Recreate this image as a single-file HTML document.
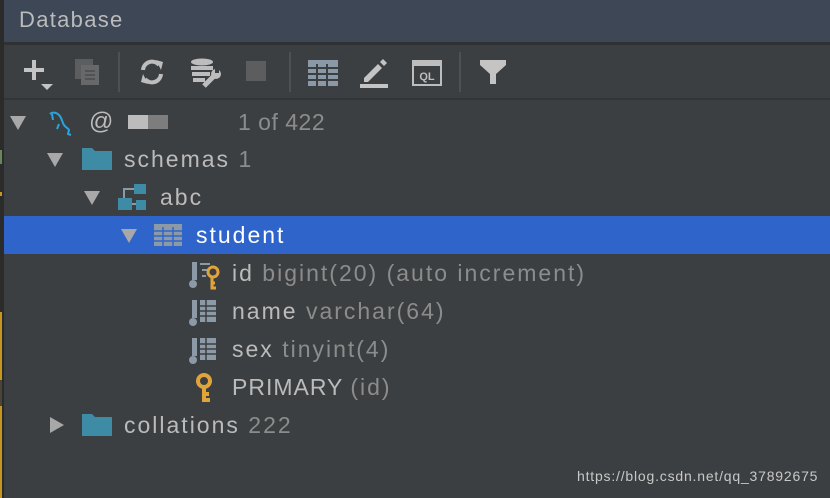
<!DOCTYPE html>
<html><head><meta charset="utf-8"><style>
*{margin:0;padding:0;box-sizing:border-box}
body{width:830px;height:498px;overflow:hidden;background:#3c3f41;font-family:"Liberation Sans",sans-serif;position:relative}
.strip{position:absolute;left:0;top:0;width:4px;height:498px;background:#2b2b2b}
.hdr{position:absolute;left:4px;top:0;width:826px;height:42px;background:#3d4756;color:#bbbbbb;font-size:22px;line-height:40px;padding-left:15px;letter-spacing:1.3px}
.sep{position:absolute;left:4px;top:42px;width:826px;height:3px;background:#2f3133}
.tb{position:absolute;left:4px;top:45px;width:826px;height:55px;background:#3c3f41;border-bottom:2px solid #323436}
.vs{position:absolute;top:7px;width:2px;height:40px;background:#4e5153}
.row{position:absolute;left:4px;width:826px;height:38px;font-size:23px;letter-spacing:2px;line-height:38px;color:#bbbbbb;white-space:nowrap}
.row span.g{color:#8c8c8c}
.tri{position:absolute;width:0;height:0;border-left:8px solid transparent;border-right:8px solid transparent;border-top:14px solid #a8a8a8;top:13px}
.trir{position:absolute;width:0;height:0;border-top:8px solid transparent;border-bottom:8px solid transparent;border-left:14px solid #a8a8a8;top:11px}
.t{position:absolute;top:0}
</style></head><body>
<div class="strip"></div>
<div style="position:absolute;left:0;top:150px;width:2px;height:14px;background:#6a8759"></div>
<div style="position:absolute;left:0;top:192px;width:2px;height:4px;background:#c7961c"></div>
<div style="position:absolute;left:0;top:312px;width:2px;height:186px;background:#c7961c"></div>
<div style="position:absolute;left:0;top:380px;width:2px;height:26px;background:#4a4536"></div>
<div class="hdr">Database</div>
<div class="sep"></div>
<div class="tb">
 <div style="position:absolute;left:20px;top:23px;width:20px;height:4px;background:#c4c4c4"></div>
 <div style="position:absolute;left:28px;top:15px;width:4px;height:20px;background:#c4c4c4"></div>
 <div style="position:absolute;left:37px;top:39px;border-left:6px solid transparent;border-right:6px solid transparent;border-top:6px solid #c4c4c4"></div>
 <svg style="position:absolute;left:70px;top:13px" width="26" height="28"><rect x="1" y="1" width="18" height="20" fill="#5b5d5f"/><rect x="7" y="7" width="18" height="20" fill="#666869"/><path d="M11 13h10M11 17h10M11 21h10" stroke="#505254" stroke-width="2"/></svg>
 <div class="vs" style="left:114px"></div>
 <svg style="position:absolute;left:134px;top:13px" width="28" height="28" viewBox="0 0 28 28"><path d="M5 12a9 9 0 0 1 16-5" stroke="#bdbdbd" stroke-width="4" fill="none"/><path d="M18 2l7 2-2 8z" fill="#bdbdbd"/><path d="M23 16a9 9 0 0 1-16 5" stroke="#bdbdbd" stroke-width="4" fill="none"/><path d="M10 26l-7-2 2-8z" fill="#bdbdbd"/></svg>
 <svg style="position:absolute;left:186px;top:13px" width="34" height="30" viewBox="0 0 34 30"><ellipse cx="12" cy="4" rx="11" ry="3.5" fill="#bdbdbd"/><path d="M1 8h22v4H1zM2 14h18v4H2zM3 20h12v4H3z" fill="#bdbdbd"/><path d="M14 28l10-10" stroke="#bdbdbd" stroke-width="5"/><circle cx="26" cy="16" r="5" fill="#bdbdbd"/><rect x="25" y="10" width="4" height="5" fill="#3c3f41"/></svg>
 <div style="position:absolute;left:242px;top:16px;width:20px;height:20px;background:#5b5d5f"></div>
 <div class="vs" style="left:285px"></div>
 <svg style="position:absolute;left:304px;top:15px" width="30" height="26"><rect width="30" height="26" fill="#8b99a6"/><path d="M0 8h30M0 14h30M0 20h30M9 4v22M19 4v22" stroke="#3c3f41" stroke-width="2"/></svg>
 <svg style="position:absolute;left:356px;top:13px" width="30" height="30"><path d="M4 20L18 6l4 4L8 24H4z" fill="#c4c4c4"/><path d="M20 4l3-3 4 4-3 3z" fill="#c4c4c4"/><rect x="0" y="26" width="28" height="4" fill="#c4c4c4"/></svg>
 <svg style="position:absolute;left:408px;top:15px" width="30" height="26"><rect x="1" y="1" width="28" height="24" fill="none" stroke="#bdbdbd" stroke-width="2"/><rect x="1" y="1" width="28" height="5" fill="#bdbdbd"/><text x="15" y="20" font-family="Liberation Sans" font-size="11" font-weight="bold" fill="#bdbdbd" text-anchor="middle">QL</text></svg>
 <div class="vs" style="left:455px"></div>
 <svg style="position:absolute;left:476px;top:15px" width="26" height="24"><path d="M0 0h26v5L16 14v10h-6V14L0 5z" fill="#c4c4c4"/></svg>
</div>

<div class="row" style="top:103px">
 <div class="tri" style="left:6px"></div>
 <svg style="position:absolute;left:42px;top:6px" width="32" height="28"><path d="M4 5c2-2 6-2 9 1 3 3 3 7 5 10 1 2 4 3 5 5l-1 4 3 1" stroke="#2aa4dc" stroke-width="2" fill="none" stroke-linejoin="round"/><path d="M6 5l1 6M13 15l-2 5" stroke="#2aa4dc" stroke-width="2"/></svg>
 <div class="t" style="left:85px;font-size:24px;letter-spacing:0">@</div>
 <div style="position:absolute;left:124px;top:12px;width:20px;height:14px;background:#bcbcbc"></div>
 <div style="position:absolute;left:144px;top:12px;width:20px;height:14px;background:#7d7d7d"></div>
 <div class="t g" style="left:234px;color:#8c8c8c;letter-spacing:0.5px">1 of 422</div>
</div>
<div class="row" style="top:140px">
 <div class="tri" style="left:43px"></div>
 <svg style="position:absolute;left:78px;top:8px" width="30" height="22"><path d="M0 0h10l3 3h17v19H0z" fill="#3e8ba6"/></svg>
 <div class="t" style="left:120px">schemas <span class="g">1</span></div>
</div>
<div class="row" style="top:178px">
 <div class="tri" style="left:80px"></div>
 <svg style="position:absolute;left:114px;top:6px" width="30" height="28"><rect x="16" y="0" width="12" height="10" fill="#3e8ba6"/><rect x="0" y="14" width="14" height="12" fill="#3e8ba6"/><rect x="18" y="16" width="10" height="10" fill="#3e8ba6"/><path d="M6 14V5h10M14 20h4" stroke="#8c9aa6" stroke-width="2" fill="none"/></svg>
 <div class="t" style="left:156px">abc</div>
</div>
<div class="row" style="top:216px;background:#2f65ca;color:#fff">
 <div class="tri" style="left:117px"></div>
 <svg style="position:absolute;left:150px;top:8px" width="28" height="22"><rect width="28" height="22" fill="#8c99a6"/><path d="M0 7h28M0 12h28M0 17h28M9 3v19M19 3v19" stroke="#2f65ca" stroke-width="1.5"/></svg>
 <div class="t" style="left:192px;color:#fff">student</div>
</div>
<div class="row" style="top:254px">
 <svg style="position:absolute;left:184px;top:6px" width="34" height="30"><rect x="4" y="2" width="5" height="18" fill="#8c99a6"/><circle cx="5" cy="24" r="4" fill="#8c99a6"/><path d="M12 4h10M14 10h6M14 16h4" stroke="#8c99a6" stroke-width="2"/><circle cx="25" cy="12" r="5" fill="none" stroke="#e0a43a" stroke-width="3"/><path d="M24 16v12h4M24 23h3" stroke="#e0a43a" stroke-width="3" fill="none"/></svg>
 <div class="t" style="left:228px">id <span class="g">bigint(20) (auto increment)</span></div>
</div>
<div class="row" style="top:292px">
 <svg style="position:absolute;left:184px;top:6px" width="34" height="30"><rect x="4" y="2" width="5" height="18" fill="#8c99a6"/><circle cx="5" cy="24" r="4" fill="#8c99a6"/><rect x="12" y="2" width="16" height="22" fill="#8c99a6"/><path d="M12 8h16M12 13h16M12 18h16M18 2v22" stroke="#3c3f41" stroke-width="1.5"/></svg>
 <div class="t" style="left:228px">name <span class="g">varchar(64)</span></div>
</div>
<div class="row" style="top:330px">
 <svg style="position:absolute;left:184px;top:6px" width="34" height="30"><rect x="4" y="2" width="5" height="18" fill="#8c99a6"/><circle cx="5" cy="24" r="4" fill="#8c99a6"/><rect x="12" y="2" width="16" height="22" fill="#8c99a6"/><path d="M12 8h16M12 13h16M12 18h16M18 2v22" stroke="#3c3f41" stroke-width="1.5"/></svg>
 <div class="t" style="left:228px">sex <span class="g">tinyint(4)</span></div>
</div>
<div class="row" style="top:368px">
 <svg style="position:absolute;left:190px;top:5px" width="22" height="30"><circle cx="10" cy="8" r="6" fill="none" stroke="#e0a43a" stroke-width="4"/><path d="M10 13v14h6M10 21h5" stroke="#e0a43a" stroke-width="4" fill="none"/></svg>
 <div class="t" style="left:228px;letter-spacing:1px">PRIMARY <span class="g" style="letter-spacing:2px">(id)</span></div>
</div>
<div class="row" style="top:406px">
 <div class="trir" style="left:46px"></div>
 <svg style="position:absolute;left:78px;top:8px" width="30" height="22"><path d="M0 0h10l3 3h17v19H0z" fill="#3e8ba6"/></svg>
 <div class="t" style="left:120px">collations <span class="g">222</span></div>
</div>
<div style="position:absolute;left:577px;top:468px;font-size:14px;letter-spacing:0.8px;color:#c8c8c8">https://blog.csdn.net/qq_37892675</div>
</body></html>
